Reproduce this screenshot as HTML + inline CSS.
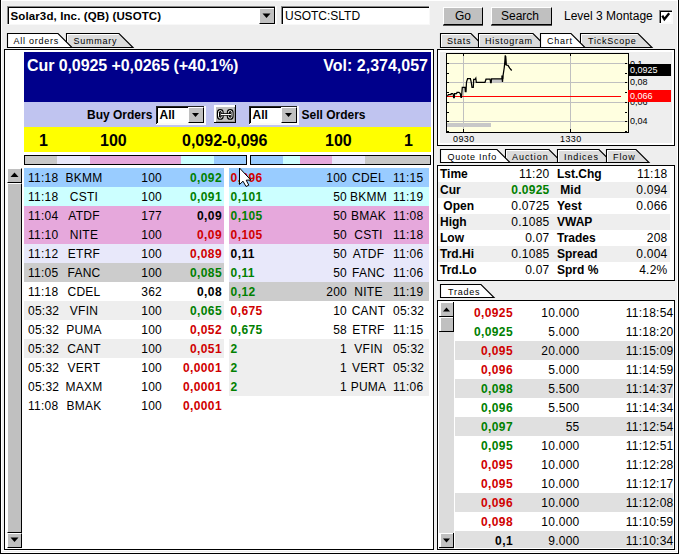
<!DOCTYPE html>
<html><head><meta charset="utf-8"><style>
html,body{margin:0;padding:0;}
body{width:682px;height:554px;position:relative;overflow:hidden;background:#eeeeee;font-family:"Liberation Sans",sans-serif;}
.a{position:absolute;}
.t{position:absolute;white-space:pre;line-height:14px;font-family:"Liberation Sans",sans-serif;}
</style></head><body>
<div class="a" style="left:0px;top:0px;width:682px;height:1px;background:#fff;"></div>
<div class="a" style="left:0px;top:0px;width:1px;height:554px;background:#000;"></div>
<div class="a" style="left:1px;top:1px;width:1px;height:551px;background:#fff;"></div>
<div class="a" style="left:678px;top:0px;width:1px;height:554px;background:#000;"></div>
<div class="a" style="left:677px;top:1px;width:1px;height:551px;background:#fff;"></div>
<div class="a" style="left:679px;top:0px;width:3px;height:554px;background:#fff;"></div>
<div class="a" style="left:0px;top:553px;width:679px;height:1px;background:#000;"></div>
<div class="a" style="left:1px;top:550px;width:677px;height:1px;background:#fff;"></div>
<div class="a" style="left:1px;top:552px;width:677px;height:1px;background:#fff;"></div>
<div class="a" style="left:7px;top:6px;width:270px;height:19px;background:#fafafa;"></div>
<div class="a" style="left:8px;top:7px;width:268px;height:17px;background:#fff;"></div>
<div class="a" style="left:7px;top:6px;width:268px;height:1px;background:#888;"></div>
<div class="a" style="left:7px;top:6px;width:1px;height:19px;background:#888;"></div>
<div class="a" style="left:8px;top:7px;width:267px;height:1px;background:#000;"></div>
<div class="a" style="left:8px;top:7px;width:1px;height:17px;background:#000;"></div>
<div class="a" style="left:7px;top:24px;width:270px;height:1px;background:#f8f8f8;"></div>
<div class="a" style="left:276px;top:6px;width:1px;height:19px;background:#f8f8f8;"></div>
<div class="a" style="left:259px;top:8px;width:16px;height:16px;background:#c0c0c0;border-top:1px solid #fff;border-left:1px solid #fff;border-bottom:1px solid #000;border-right:1px solid #000;box-sizing:border-box;"></div>
<div class="a" style="left:274px;top:7px;width:1px;height:17px;background:#000;"></div>
<svg class="a" style="left:262px;top:13px" width="10" height="6"><path d="M0.5 0.5 L8.5 0.5 L4.5 5 Z" fill="#000"/></svg>
<div class="t" style="top:9px;font-size:11.5px;font-weight:bold;color:#000;left:10.5px;letter-spacing:0.12px;">Solar3d, Inc. (QB) (USOTC)</div>
<div class="a" style="left:281px;top:6px;width:149px;height:19px;background:#fafafa;"></div>
<div class="a" style="left:282px;top:7px;width:147px;height:17px;background:#fff;"></div>
<div class="a" style="left:281px;top:6px;width:148px;height:1px;background:#888;"></div>
<div class="a" style="left:281px;top:6px;width:1px;height:19px;background:#888;"></div>
<div class="a" style="left:282px;top:7px;width:147px;height:1px;background:#000;"></div>
<div class="a" style="left:282px;top:7px;width:1px;height:17px;background:#000;"></div>
<div class="a" style="left:281px;top:24px;width:149px;height:1px;background:#f8f8f8;"></div>
<div class="a" style="left:429px;top:6px;width:1px;height:19px;background:#f8f8f8;"></div>
<div class="t" style="top:9px;font-size:12px;font-weight:normal;color:#000;left:285px;">USOTC:SLTD</div>
<div class="a" style="left:443px;top:7px;width:40px;height:18px;background:#c0c0c0;border-top:1px solid #fff;border-left:1px solid #fff;border-bottom:1px solid #000;border-right:1px solid #000;box-sizing:border-box;"></div>
<div class="a" style="left:443px;top:25px;width:40px;height:1px;background:#555;"></div>
<div class="t" style="top:9px;font-size:12px;font-weight:normal;color:#000;left:455px;">Go</div>
<div class="a" style="left:491px;top:7px;width:61px;height:18px;background:#c0c0c0;border-top:1px solid #fff;border-left:1px solid #fff;border-bottom:1px solid #000;border-right:1px solid #000;box-sizing:border-box;"></div>
<div class="a" style="left:491px;top:25px;width:61px;height:1px;background:#555;"></div>
<div class="t" style="top:9px;font-size:12px;font-weight:normal;color:#000;left:501px;">Search</div>
<div class="t" style="top:9px;font-size:12px;font-weight:normal;color:#000;left:564px;">Level 3 Montage</div>
<div class="a" style="left:659px;top:10px;width:14px;height:14px;background:#fafafa;"></div>
<div class="a" style="left:661px;top:12px;width:10px;height:10px;background:#fff;"></div>
<div class="a" style="left:659px;top:10px;width:13px;height:1px;background:#888;"></div>
<div class="a" style="left:659px;top:10px;width:1px;height:13px;background:#888;"></div>
<div class="a" style="left:660px;top:11px;width:12px;height:1px;background:#000;"></div>
<div class="a" style="left:660px;top:11px;width:1px;height:12px;background:#000;"></div>
<svg class="a" style="left:659px;top:10px" width="14" height="14"><path d="M3.3 5.6 L5.4 9.3 L10.2 3.2" stroke="#000" stroke-width="2.3" fill="none" stroke-linecap="butt" stroke-linejoin="miter"/></svg>
<!--tabs-->
<svg class="a" style="left:66px;top:33px;overflow:visible" width="68" height="16"><polygon points="0.5,14.5 0.5,0.5 53,0.5 67,14.5" fill="#dcdcdc" stroke="#000" stroke-width="1.1"/><polyline points="1.5,14 1.5,1.5 52.5,1.5" fill="none" stroke="#fff" stroke-width="1"/></svg>
<div class="t" style="top:34.0px;font-size:9px;font-weight:normal;color:#000;left:73.5px;letter-spacing:0.75px;">Summary</div>
<svg class="a" style="left:7px;top:33px;overflow:visible" width="66" height="16"><polygon points="0.5,14.5 0.5,0.5 51,0.5 65,14.5" fill="#fff" stroke="#000" stroke-width="1.1"/></svg>
<div class="t" style="top:34.0px;font-size:9px;font-weight:normal;color:#000;left:13.5px;letter-spacing:0.75px;">All orders</div>
<svg class="a" style="left:440px;top:33px;overflow:visible" width="46" height="16"><polygon points="0.5,14.5 0.5,0.5 31,0.5 45,14.5" fill="#dcdcdc" stroke="#000" stroke-width="1.1"/><polyline points="1.5,14 1.5,1.5 30.5,1.5" fill="none" stroke="#fff" stroke-width="1"/></svg>
<div class="t" style="top:34.0px;font-size:9px;font-weight:normal;color:#000;left:447px;letter-spacing:0.75px;">Stats</div>
<svg class="a" style="left:478px;top:33px;overflow:visible" width="70" height="16"><polygon points="0.5,14.5 0.5,0.5 55,0.5 69,14.5" fill="#dcdcdc" stroke="#000" stroke-width="1.1"/><polyline points="1.5,14 1.5,1.5 54.5,1.5" fill="none" stroke="#fff" stroke-width="1"/></svg>
<div class="t" style="top:34.0px;font-size:9px;font-weight:normal;color:#000;left:485px;letter-spacing:0.75px;">Histogram</div>
<svg class="a" style="left:580px;top:33px;overflow:visible" width="73" height="16"><polygon points="0.5,14.5 0.5,0.5 58,0.5 72,14.5" fill="#dcdcdc" stroke="#000" stroke-width="1.1"/><polyline points="1.5,14 1.5,1.5 57.5,1.5" fill="none" stroke="#fff" stroke-width="1"/></svg>
<div class="t" style="top:34.0px;font-size:9px;font-weight:normal;color:#000;left:588px;letter-spacing:0.75px;">TickScope</div>
<svg class="a" style="left:540px;top:33px;overflow:visible" width="46" height="16"><polygon points="0.5,14.5 0.5,0.5 31,0.5 45,14.5" fill="#fff" stroke="#000" stroke-width="1.1"/></svg>
<div class="t" style="top:34.0px;font-size:9px;font-weight:normal;color:#000;left:547px;letter-spacing:0.75px;">Chart</div>
<div class="a" style="left:4px;top:49px;width:430px;height:501px;background:#fff;border:1px solid #000;box-sizing:border-box;"></div>
<div class="a" style="left:24px;top:52px;width:407px;height:50px;background:#00008b;"></div>
<div class="t" style="top:59px;font-size:16px;font-weight:bold;color:#fff;left:27px;letter-spacing:-0.08px;">Cur 0,0925 +0,0265 (+40.1%)</div>
<div class="t" style="top:59px;font-size:16px;font-weight:bold;color:#fff;right:254px;text-align:right;">Vol: 2,374,057</div>
<div class="a" style="left:24px;top:102px;width:407px;height:25px;background:#c0c4f0;"></div>
<div class="t" style="top:107.5px;font-size:12px;font-weight:bold;color:#000;left:87px;">Buy Orders</div>
<div class="t" style="top:107.5px;font-size:12px;font-weight:bold;color:#000;left:301.5px;">Sell Orders</div>
<div class="a" style="left:156px;top:106px;width:50px;height:19px;background:#fafafa;"></div>
<div class="a" style="left:157px;top:107px;width:47px;height:16px;background:#fff;"></div>
<div class="a" style="left:156px;top:106px;width:48px;height:1px;background:#222;"></div>
<div class="a" style="left:156px;top:106px;width:1px;height:18px;background:#222;"></div>
<div class="a" style="left:157px;top:107px;width:47px;height:1px;background:#000;"></div>
<div class="a" style="left:157px;top:107px;width:1px;height:16px;background:#000;"></div>
<div class="a" style="left:188px;top:107px;width:16px;height:16px;background:#c0c0c0;border-top:1px solid #fff;border-left:1px solid #fff;border-bottom:1px solid #000;border-right:1px solid #000;box-sizing:border-box;"></div>
<svg class="a" style="left:192px;top:113px" width="8" height="5"><path d="M0 0 L7 0 L3.5 4 Z" fill="#000"/></svg>
<div class="t" style="top:108px;font-size:12px;font-weight:bold;color:#000;left:159.5px;">All</div>
<div class="a" style="left:249px;top:106px;width:50px;height:19px;background:#fafafa;"></div>
<div class="a" style="left:250px;top:107px;width:47px;height:16px;background:#fff;"></div>
<div class="a" style="left:249px;top:106px;width:48px;height:1px;background:#222;"></div>
<div class="a" style="left:249px;top:106px;width:1px;height:18px;background:#222;"></div>
<div class="a" style="left:250px;top:107px;width:47px;height:1px;background:#000;"></div>
<div class="a" style="left:250px;top:107px;width:1px;height:16px;background:#000;"></div>
<div class="a" style="left:281px;top:107px;width:16px;height:16px;background:#c0c0c0;border-top:1px solid #fff;border-left:1px solid #fff;border-bottom:1px solid #000;border-right:1px solid #000;box-sizing:border-box;"></div>
<svg class="a" style="left:285px;top:113px" width="8" height="5"><path d="M0 0 L7 0 L3.5 4 Z" fill="#000"/></svg>
<div class="t" style="top:108px;font-size:12px;font-weight:bold;color:#000;left:252.5px;">All</div>
<div class="a" style="left:214px;top:105px;width:22px;height:18px;background:#c0c0c0;"></div>
<div class="a" style="left:214px;top:105px;width:21px;height:2px;background:#fff;"></div>
<div class="a" style="left:214px;top:105px;width:2px;height:17px;background:#fff;"></div>
<div class="a" style="left:235px;top:105px;width:1px;height:18px;background:#000;"></div>
<div class="a" style="left:214px;top:122px;width:22px;height:1px;background:#000;"></div>
<div class="a" style="left:216px;top:121px;width:19px;height:1px;background:#999;"></div>
<div class="a" style="left:234px;top:107px;width:1px;height:15px;background:#999;"></div>
<svg class="a" style="left:212px;top:103px" width="28" height="22"><rect x="6.5" y="7.6" width="3.6" height="7.6" rx="1.8" fill="none" stroke="#000" stroke-width="3.2"/><rect x="16.4" y="7.6" width="3.6" height="7.6" rx="1.8" fill="none" stroke="#000" stroke-width="3.2"/><rect x="6.5" y="7.6" width="3.6" height="7.6" rx="1.8" fill="none" stroke="#fff" stroke-width="1"/><rect x="16.4" y="7.6" width="3.6" height="7.6" rx="1.8" fill="none" stroke="#fff" stroke-width="1"/><rect x="9" y="10.2" width="10" height="2.6" fill="#000"/><rect x="9" y="11" width="10" height="1.1" fill="#fff"/></svg>
<div class="a" style="left:24px;top:127px;width:407px;height:25px;background:#ffff00;"></div>
<div class="t" style="top:134px;font-size:16px;font-weight:bold;color:#000;left:39px;">1</div>
<div class="t" style="top:134px;font-size:16px;font-weight:bold;color:#000;left:100px;">100</div>
<div class="t" style="top:134px;font-size:16px;font-weight:bold;color:#000;left:182px;">0,092-0,096</div>
<div class="t" style="top:134px;font-size:16px;font-weight:bold;color:#000;left:325px;">100</div>
<div class="t" style="top:134px;font-size:16px;font-weight:bold;color:#000;left:404px;">1</div>
<div class="a" style="left:24px;top:155px;width:223px;height:10px;border:1px solid #000;box-sizing:border-box;"></div>
<div class="a" style="left:25px;top:156px;width:32px;height:8px;background:#c8c8c8;"></div>
<div class="a" style="left:57px;top:156px;width:33px;height:8px;background:#e8e8fa;"></div>
<div class="a" style="left:90px;top:156px;width:91px;height:8px;background:#e6a8dc;"></div>
<div class="a" style="left:181px;top:156px;width:33px;height:8px;background:#ccffff;"></div>
<div class="a" style="left:214px;top:156px;width:32px;height:8px;background:#99ccff;"></div>
<div class="a" style="left:250px;top:155px;width:181px;height:10px;border:1px solid #000;box-sizing:border-box;"></div>
<div class="a" style="left:251px;top:156px;width:32px;height:8px;background:#99ccff;"></div>
<div class="a" style="left:283px;top:156px;width:17px;height:8px;background:#ccffff;"></div>
<div class="a" style="left:300px;top:156px;width:32px;height:8px;background:#e6a8dc;"></div>
<div class="a" style="left:332px;top:156px;width:33px;height:8px;background:#e8e8fa;"></div>
<div class="a" style="left:365px;top:156px;width:65px;height:8px;background:#c8c8c8;"></div>
<div class="a" style="left:7px;top:168px;width:15px;height:15px;background:#c0c0c0;border-top:1px solid #fff;border-left:1px solid #fff;border-bottom:1px solid #000;border-right:1px solid #000;box-sizing:border-box;"></div>
<svg class="a" style="left:10px;top:172px" width="9" height="6"><path d="M0.5 5 L8.5 5 L4.5 0.5 Z" fill="#000"/></svg>
<div class="a" style="left:7px;top:183px;width:15px;height:350px;background:#c0c0c0;border-top:1px solid #fff;border-left:1px solid #fff;border-bottom:1px solid #000;border-right:1px solid #000;box-sizing:border-box;"></div>
<div class="a" style="left:7px;top:533px;width:15px;height:15px;background:#c0c0c0;border-top:1px solid #fff;border-left:1px solid #fff;border-bottom:1px solid #000;border-right:1px solid #000;box-sizing:border-box;"></div>
<svg class="a" style="left:10px;top:537px" width="9" height="6"><path d="M0.5 0.5 L8.5 0.5 L4.5 5 Z" fill="#000"/></svg>
<div class="a" style="left:24px;top:168px;width:200px;height:19px;background:#99ccff;"></div>
<div class="t" style="top:171px;font-size:12px;font-weight:normal;color:#000;left:28px;letter-spacing:0.25px;">11:18</div>
<div class="t" style="top:171px;font-size:12px;font-weight:normal;color:#000;left:-16px;width:200px;text-align:center;letter-spacing:0.25px;">BKMM</div>
<div class="t" style="top:171px;font-size:12px;font-weight:normal;color:#000;right:520px;text-align:right;letter-spacing:0.25px;">100</div>
<div class="t" style="top:171px;font-size:12px;font-weight:bold;color:#008000;right:460px;text-align:right;letter-spacing:0.4px;">0,092</div>
<div class="a" style="left:24px;top:187px;width:200px;height:19px;background:#ccffff;"></div>
<div class="t" style="top:190px;font-size:12px;font-weight:normal;color:#000;left:28px;letter-spacing:0.25px;">11:18</div>
<div class="t" style="top:190px;font-size:12px;font-weight:normal;color:#000;left:-16px;width:200px;text-align:center;letter-spacing:0.25px;">CSTI</div>
<div class="t" style="top:190px;font-size:12px;font-weight:normal;color:#000;right:520px;text-align:right;letter-spacing:0.25px;">100</div>
<div class="t" style="top:190px;font-size:12px;font-weight:bold;color:#008000;right:460px;text-align:right;letter-spacing:0.4px;">0,091</div>
<div class="a" style="left:24px;top:206px;width:200px;height:19px;background:#e6a8dc;"></div>
<div class="t" style="top:209px;font-size:12px;font-weight:normal;color:#000;left:28px;letter-spacing:0.25px;">11:04</div>
<div class="t" style="top:209px;font-size:12px;font-weight:normal;color:#000;left:-16px;width:200px;text-align:center;letter-spacing:0.25px;">ATDF</div>
<div class="t" style="top:209px;font-size:12px;font-weight:normal;color:#000;right:520px;text-align:right;letter-spacing:0.25px;">177</div>
<div class="t" style="top:209px;font-size:12px;font-weight:bold;color:#000;right:460px;text-align:right;letter-spacing:0.4px;">0,09</div>
<div class="a" style="left:24px;top:225px;width:200px;height:19px;background:#e6a8dc;"></div>
<div class="t" style="top:228px;font-size:12px;font-weight:normal;color:#000;left:28px;letter-spacing:0.25px;">11:10</div>
<div class="t" style="top:228px;font-size:12px;font-weight:normal;color:#000;left:-16px;width:200px;text-align:center;letter-spacing:0.25px;">NITE</div>
<div class="t" style="top:228px;font-size:12px;font-weight:normal;color:#000;right:520px;text-align:right;letter-spacing:0.25px;">100</div>
<div class="t" style="top:228px;font-size:12px;font-weight:bold;color:#d00000;right:460px;text-align:right;letter-spacing:0.4px;">0,09</div>
<div class="a" style="left:24px;top:244px;width:200px;height:19px;background:#e8e8fa;"></div>
<div class="t" style="top:247px;font-size:12px;font-weight:normal;color:#000;left:28px;letter-spacing:0.25px;">11:12</div>
<div class="t" style="top:247px;font-size:12px;font-weight:normal;color:#000;left:-16px;width:200px;text-align:center;letter-spacing:0.25px;">ETRF</div>
<div class="t" style="top:247px;font-size:12px;font-weight:normal;color:#000;right:520px;text-align:right;letter-spacing:0.25px;">100</div>
<div class="t" style="top:247px;font-size:12px;font-weight:bold;color:#d00000;right:460px;text-align:right;letter-spacing:0.4px;">0,089</div>
<div class="a" style="left:24px;top:263px;width:200px;height:19px;background:#cccccc;"></div>
<div class="t" style="top:266px;font-size:12px;font-weight:normal;color:#000;left:28px;letter-spacing:0.25px;">11:05</div>
<div class="t" style="top:266px;font-size:12px;font-weight:normal;color:#000;left:-16px;width:200px;text-align:center;letter-spacing:0.25px;">FANC</div>
<div class="t" style="top:266px;font-size:12px;font-weight:normal;color:#000;right:520px;text-align:right;letter-spacing:0.25px;">100</div>
<div class="t" style="top:266px;font-size:12px;font-weight:bold;color:#008000;right:460px;text-align:right;letter-spacing:0.4px;">0,085</div>
<div class="a" style="left:24px;top:282px;width:200px;height:19px;background:#ffffff;"></div>
<div class="t" style="top:285px;font-size:12px;font-weight:normal;color:#000;left:28px;letter-spacing:0.25px;">11:18</div>
<div class="t" style="top:285px;font-size:12px;font-weight:normal;color:#000;left:-16px;width:200px;text-align:center;letter-spacing:0.25px;">CDEL</div>
<div class="t" style="top:285px;font-size:12px;font-weight:normal;color:#000;right:520px;text-align:right;letter-spacing:0.25px;">362</div>
<div class="t" style="top:285px;font-size:12px;font-weight:bold;color:#000;right:460px;text-align:right;letter-spacing:0.4px;">0,08</div>
<div class="a" style="left:24px;top:301px;width:200px;height:19px;background:#eeeeee;"></div>
<div class="t" style="top:304px;font-size:12px;font-weight:normal;color:#000;left:28px;letter-spacing:0.25px;">05:32</div>
<div class="t" style="top:304px;font-size:12px;font-weight:normal;color:#000;left:-16px;width:200px;text-align:center;letter-spacing:0.25px;">VFIN</div>
<div class="t" style="top:304px;font-size:12px;font-weight:normal;color:#000;right:520px;text-align:right;letter-spacing:0.25px;">100</div>
<div class="t" style="top:304px;font-size:12px;font-weight:bold;color:#008000;right:460px;text-align:right;letter-spacing:0.4px;">0,065</div>
<div class="a" style="left:24px;top:320px;width:200px;height:19px;background:#ffffff;"></div>
<div class="t" style="top:323px;font-size:12px;font-weight:normal;color:#000;left:28px;letter-spacing:0.25px;">05:32</div>
<div class="t" style="top:323px;font-size:12px;font-weight:normal;color:#000;left:-16px;width:200px;text-align:center;letter-spacing:0.25px;">PUMA</div>
<div class="t" style="top:323px;font-size:12px;font-weight:normal;color:#000;right:520px;text-align:right;letter-spacing:0.25px;">100</div>
<div class="t" style="top:323px;font-size:12px;font-weight:bold;color:#d00000;right:460px;text-align:right;letter-spacing:0.4px;">0,052</div>
<div class="a" style="left:24px;top:339px;width:200px;height:19px;background:#eeeeee;"></div>
<div class="t" style="top:342px;font-size:12px;font-weight:normal;color:#000;left:28px;letter-spacing:0.25px;">05:32</div>
<div class="t" style="top:342px;font-size:12px;font-weight:normal;color:#000;left:-16px;width:200px;text-align:center;letter-spacing:0.25px;">CANT</div>
<div class="t" style="top:342px;font-size:12px;font-weight:normal;color:#000;right:520px;text-align:right;letter-spacing:0.25px;">100</div>
<div class="t" style="top:342px;font-size:12px;font-weight:bold;color:#d00000;right:460px;text-align:right;letter-spacing:0.4px;">0,051</div>
<div class="a" style="left:24px;top:358px;width:200px;height:19px;background:#ffffff;"></div>
<div class="t" style="top:361px;font-size:12px;font-weight:normal;color:#000;left:28px;letter-spacing:0.25px;">05:32</div>
<div class="t" style="top:361px;font-size:12px;font-weight:normal;color:#000;left:-16px;width:200px;text-align:center;letter-spacing:0.25px;">VERT</div>
<div class="t" style="top:361px;font-size:12px;font-weight:normal;color:#000;right:520px;text-align:right;letter-spacing:0.25px;">100</div>
<div class="t" style="top:361px;font-size:12px;font-weight:bold;color:#d00000;right:460px;text-align:right;letter-spacing:0.4px;">0,0001</div>
<div class="a" style="left:24px;top:377px;width:200px;height:19px;background:#ffffff;"></div>
<div class="t" style="top:380px;font-size:12px;font-weight:normal;color:#000;left:28px;letter-spacing:0.25px;">05:32</div>
<div class="t" style="top:380px;font-size:12px;font-weight:normal;color:#000;left:-16px;width:200px;text-align:center;letter-spacing:0.25px;">MAXM</div>
<div class="t" style="top:380px;font-size:12px;font-weight:normal;color:#000;right:520px;text-align:right;letter-spacing:0.25px;">100</div>
<div class="t" style="top:380px;font-size:12px;font-weight:bold;color:#d00000;right:460px;text-align:right;letter-spacing:0.4px;">0,0001</div>
<div class="a" style="left:24px;top:396px;width:200px;height:19px;background:#ffffff;"></div>
<div class="t" style="top:399px;font-size:12px;font-weight:normal;color:#000;left:28px;letter-spacing:0.25px;">11:08</div>
<div class="t" style="top:399px;font-size:12px;font-weight:normal;color:#000;left:-16px;width:200px;text-align:center;letter-spacing:0.25px;">BMAK</div>
<div class="t" style="top:399px;font-size:12px;font-weight:normal;color:#000;right:520px;text-align:right;letter-spacing:0.25px;">100</div>
<div class="t" style="top:399px;font-size:12px;font-weight:bold;color:#d00000;right:460px;text-align:right;letter-spacing:0.4px;">0,0001</div>
<div class="a" style="left:229px;top:168px;width:200px;height:19px;background:#99ccff;"></div>
<div class="t" style="top:171px;font-size:12px;font-weight:bold;color:#d00000;left:230.6px;letter-spacing:0.4px;">0,096</div>
<div class="t" style="top:171px;font-size:12px;font-weight:normal;color:#000;right:335px;text-align:right;letter-spacing:0.25px;">100</div>
<div class="t" style="top:171px;font-size:12px;font-weight:normal;color:#000;left:268.5px;width:200px;text-align:center;letter-spacing:0.25px;">CDEL</div>
<div class="t" style="top:171px;font-size:12px;font-weight:normal;color:#000;left:393px;letter-spacing:0.25px;">11:15</div>
<div class="a" style="left:229px;top:187px;width:200px;height:19px;background:#ccffff;"></div>
<div class="t" style="top:190px;font-size:12px;font-weight:bold;color:#008000;left:230.6px;letter-spacing:0.4px;">0,101</div>
<div class="t" style="top:190px;font-size:12px;font-weight:normal;color:#000;right:335px;text-align:right;letter-spacing:0.25px;">50</div>
<div class="t" style="top:190px;font-size:12px;font-weight:normal;color:#000;left:268.5px;width:200px;text-align:center;letter-spacing:0.25px;">BKMM</div>
<div class="t" style="top:190px;font-size:12px;font-weight:normal;color:#000;left:393px;letter-spacing:0.25px;">11:19</div>
<div class="a" style="left:229px;top:206px;width:200px;height:19px;background:#e6a8dc;"></div>
<div class="t" style="top:209px;font-size:12px;font-weight:bold;color:#008000;left:230.6px;letter-spacing:0.4px;">0,105</div>
<div class="t" style="top:209px;font-size:12px;font-weight:normal;color:#000;right:335px;text-align:right;letter-spacing:0.25px;">50</div>
<div class="t" style="top:209px;font-size:12px;font-weight:normal;color:#000;left:268.5px;width:200px;text-align:center;letter-spacing:0.25px;">BMAK</div>
<div class="t" style="top:209px;font-size:12px;font-weight:normal;color:#000;left:393px;letter-spacing:0.25px;">11:08</div>
<div class="a" style="left:229px;top:225px;width:200px;height:19px;background:#e6a8dc;"></div>
<div class="t" style="top:228px;font-size:12px;font-weight:bold;color:#d00000;left:230.6px;letter-spacing:0.4px;">0,105</div>
<div class="t" style="top:228px;font-size:12px;font-weight:normal;color:#000;right:335px;text-align:right;letter-spacing:0.25px;">50</div>
<div class="t" style="top:228px;font-size:12px;font-weight:normal;color:#000;left:268.5px;width:200px;text-align:center;letter-spacing:0.25px;">CSTI</div>
<div class="t" style="top:228px;font-size:12px;font-weight:normal;color:#000;left:393px;letter-spacing:0.25px;">11:18</div>
<div class="a" style="left:229px;top:244px;width:200px;height:19px;background:#e8e8fa;"></div>
<div class="t" style="top:247px;font-size:12px;font-weight:bold;color:#000;left:230.6px;letter-spacing:0.4px;">0,11</div>
<div class="t" style="top:247px;font-size:12px;font-weight:normal;color:#000;right:335px;text-align:right;letter-spacing:0.25px;">50</div>
<div class="t" style="top:247px;font-size:12px;font-weight:normal;color:#000;left:268.5px;width:200px;text-align:center;letter-spacing:0.25px;">ATDF</div>
<div class="t" style="top:247px;font-size:12px;font-weight:normal;color:#000;left:393px;letter-spacing:0.25px;">11:06</div>
<div class="a" style="left:229px;top:263px;width:200px;height:19px;background:#e8e8fa;"></div>
<div class="t" style="top:266px;font-size:12px;font-weight:bold;color:#008000;left:230.6px;letter-spacing:0.4px;">0,11</div>
<div class="t" style="top:266px;font-size:12px;font-weight:normal;color:#000;right:335px;text-align:right;letter-spacing:0.25px;">50</div>
<div class="t" style="top:266px;font-size:12px;font-weight:normal;color:#000;left:268.5px;width:200px;text-align:center;letter-spacing:0.25px;">FANC</div>
<div class="t" style="top:266px;font-size:12px;font-weight:normal;color:#000;left:393px;letter-spacing:0.25px;">11:06</div>
<div class="a" style="left:229px;top:282px;width:200px;height:19px;background:#cccccc;"></div>
<div class="t" style="top:285px;font-size:12px;font-weight:bold;color:#008000;left:230.6px;letter-spacing:0.4px;">0,12</div>
<div class="t" style="top:285px;font-size:12px;font-weight:normal;color:#000;right:335px;text-align:right;letter-spacing:0.25px;">200</div>
<div class="t" style="top:285px;font-size:12px;font-weight:normal;color:#000;left:268.5px;width:200px;text-align:center;letter-spacing:0.25px;">NITE</div>
<div class="t" style="top:285px;font-size:12px;font-weight:normal;color:#000;left:393px;letter-spacing:0.25px;">11:19</div>
<div class="a" style="left:229px;top:301px;width:200px;height:19px;background:#ffffff;"></div>
<div class="t" style="top:304px;font-size:12px;font-weight:bold;color:#d00000;left:230.6px;letter-spacing:0.4px;">0,675</div>
<div class="t" style="top:304px;font-size:12px;font-weight:normal;color:#000;right:335px;text-align:right;letter-spacing:0.25px;">10</div>
<div class="t" style="top:304px;font-size:12px;font-weight:normal;color:#000;left:268.5px;width:200px;text-align:center;letter-spacing:0.25px;">CANT</div>
<div class="t" style="top:304px;font-size:12px;font-weight:normal;color:#000;left:393px;letter-spacing:0.25px;">05:32</div>
<div class="a" style="left:229px;top:320px;width:200px;height:19px;background:#ffffff;"></div>
<div class="t" style="top:323px;font-size:12px;font-weight:bold;color:#008000;left:230.6px;letter-spacing:0.4px;">0,675</div>
<div class="t" style="top:323px;font-size:12px;font-weight:normal;color:#000;right:335px;text-align:right;letter-spacing:0.25px;">58</div>
<div class="t" style="top:323px;font-size:12px;font-weight:normal;color:#000;left:268.5px;width:200px;text-align:center;letter-spacing:0.25px;">ETRF</div>
<div class="t" style="top:323px;font-size:12px;font-weight:normal;color:#000;left:393px;letter-spacing:0.25px;">11:15</div>
<div class="a" style="left:229px;top:339px;width:200px;height:19px;background:#eeeeee;"></div>
<div class="t" style="top:342px;font-size:12px;font-weight:bold;color:#008000;left:230.6px;letter-spacing:0.4px;">2</div>
<div class="t" style="top:342px;font-size:12px;font-weight:normal;color:#000;right:335px;text-align:right;letter-spacing:0.25px;">1</div>
<div class="t" style="top:342px;font-size:12px;font-weight:normal;color:#000;left:268.5px;width:200px;text-align:center;letter-spacing:0.25px;">VFIN</div>
<div class="t" style="top:342px;font-size:12px;font-weight:normal;color:#000;left:393px;letter-spacing:0.25px;">05:32</div>
<div class="a" style="left:229px;top:358px;width:200px;height:19px;background:#eeeeee;"></div>
<div class="t" style="top:361px;font-size:12px;font-weight:bold;color:#008000;left:230.6px;letter-spacing:0.4px;">2</div>
<div class="t" style="top:361px;font-size:12px;font-weight:normal;color:#000;right:335px;text-align:right;letter-spacing:0.25px;">1</div>
<div class="t" style="top:361px;font-size:12px;font-weight:normal;color:#000;left:268.5px;width:200px;text-align:center;letter-spacing:0.25px;">VERT</div>
<div class="t" style="top:361px;font-size:12px;font-weight:normal;color:#000;left:393px;letter-spacing:0.25px;">05:32</div>
<div class="a" style="left:229px;top:377px;width:200px;height:19px;background:#eeeeee;"></div>
<div class="t" style="top:380px;font-size:12px;font-weight:bold;color:#008000;left:230.6px;letter-spacing:0.4px;">2</div>
<div class="t" style="top:380px;font-size:12px;font-weight:normal;color:#000;right:335px;text-align:right;letter-spacing:0.25px;">1</div>
<div class="t" style="top:380px;font-size:12px;font-weight:normal;color:#000;left:268.5px;width:200px;text-align:center;letter-spacing:0.25px;">PUMA</div>
<div class="t" style="top:380px;font-size:12px;font-weight:normal;color:#000;left:393px;letter-spacing:0.25px;">11:06</div>
<div class="a" style="left:437px;top:49px;width:238px;height:97px;background:#eeeeee;border:1px solid #000;box-sizing:border-box;"></div>
<div class="a" style="left:438px;top:50px;width:236px;height:2px;background:#fff;"></div>
<div class="a" style="left:438px;top:50px;width:2px;height:95px;background:#fff;"></div>
<div class="a" style="left:438px;top:143px;width:236px;height:2px;background:#fff;"></div>
<div class="a" style="left:672px;top:50px;width:2px;height:95px;background:#fff;"></div>
<div class="a" style="left:446px;top:53px;width:183px;height:80px;background:#ffffe0;border:1px solid #000;box-sizing:border-box;"></div>
<!--chart-->
<svg class="a" style="left:0;top:0" width="682" height="554"><line x1="447" y1="63.5" x2="628" y2="63.5" stroke="#c0c0c0" stroke-width="1"/><line x1="447" y1="82.5" x2="628" y2="82.5" stroke="#c0c0c0" stroke-width="1"/><line x1="447" y1="102.5" x2="628" y2="102.5" stroke="#c0c0c0" stroke-width="1"/><line x1="447" y1="121.5" x2="628" y2="121.5" stroke="#c0c0c0" stroke-width="1"/><line x1="463.5" y1="54" x2="463.5" y2="132" stroke="#c0c0c0" stroke-width="1"/><line x1="570.5" y1="54" x2="570.5" y2="132" stroke="#c0c0c0" stroke-width="1"/><line x1="447" y1="63.5" x2="449" y2="63.5" stroke="#000"/><line x1="625" y1="63.5" x2="627" y2="63.5" stroke="#000"/><line x1="447" y1="73.5" x2="449" y2="73.5" stroke="#000"/><line x1="625" y1="73.5" x2="627" y2="73.5" stroke="#000"/><line x1="447" y1="82.5" x2="449" y2="82.5" stroke="#000"/><line x1="625" y1="82.5" x2="627" y2="82.5" stroke="#000"/><line x1="447" y1="92.5" x2="449" y2="92.5" stroke="#000"/><line x1="625" y1="92.5" x2="627" y2="92.5" stroke="#000"/><line x1="447" y1="102.5" x2="449" y2="102.5" stroke="#000"/><line x1="625" y1="102.5" x2="627" y2="102.5" stroke="#000"/><line x1="447" y1="112.5" x2="449" y2="112.5" stroke="#000"/><line x1="625" y1="112.5" x2="627" y2="112.5" stroke="#000"/><line x1="447" y1="121.5" x2="449" y2="121.5" stroke="#000"/><line x1="625" y1="121.5" x2="627" y2="121.5" stroke="#000"/><line x1="447" y1="131.5" x2="449" y2="131.5" stroke="#000"/><line x1="625" y1="131.5" x2="627" y2="131.5" stroke="#000"/><line x1="463.5" y1="54" x2="463.5" y2="56" stroke="#000"/><line x1="463.5" y1="129" x2="463.5" y2="132" stroke="#000"/><line x1="570.5" y1="54" x2="570.5" y2="56" stroke="#000"/><line x1="570.5" y1="129" x2="570.5" y2="132" stroke="#000"/><rect x="447" y="123" width="44" height="4" fill="#c8c8c8"/><rect x="492.2" y="79.2" width="9.9" height="3" fill="#c8c8c8"/><line x1="447" y1="96.5" x2="621" y2="96.5" stroke="#ff0000" stroke-width="1.2"/><polyline points="447.4,96.3 448.4,94.5 451,94.5 451.2,93.6 452.6,93.6 453.2,94 453.6,97.5 454.3,97.5 454.6,93.6 456.6,93.6 457,92.4 459,92.4 460.3,93.6 461,97.3 461.5,97.3 462.3,87.3 465,87.3 465.3,91.7 466,91.7 466.5,82 467.6,78.7 470.4,78.7 471.2,82 472,87.3 473.3,87.3 473.7,79.4 475.2,79.2 475.8,78.2 476.3,82.3 485,82.3 486,79.2 490.1,79.2 490.6,82.5 491.2,82.5 491.6,78.8 502.2,78.6 502.5,81.9 503,75.8 504.2,68 504.6,64.4 505.3,55.3 506.2,65 508,65.4 509.7,68.1 511.7,70.5" fill="none" stroke="#000" stroke-width="1.25" stroke-linejoin="miter"/><line x1="505.6" y1="56" x2="505.9" y2="65" stroke="#000" stroke-width="1.4"/><rect x="501.3" y="75.5" width="2" height="3.5" fill="#000"/></svg>
<div class="t" style="top:56.5px;font-size:9px;font-weight:normal;color:#000;left:630px;">0,1</div>
<div class="t" style="top:75px;font-size:9px;font-weight:normal;color:#000;left:630px;">0,08</div>
<div class="t" style="top:95px;font-size:9px;font-weight:normal;color:#000;left:630px;">0,06</div>
<div class="t" style="top:114px;font-size:9px;font-weight:normal;color:#000;left:630px;">0,04</div>
<div class="a" style="left:628px;top:64px;width:43px;height:12px;background:#000;"></div>
<div class="t" style="top:62.8px;font-size:9px;font-weight:normal;color:#fff;left:630px;">0,0925</div>
<div class="a" style="left:628px;top:90px;width:43px;height:12px;background:#ff0000;"></div>
<div class="t" style="top:89px;font-size:9px;font-weight:normal;color:#fff;left:630px;">0,066</div>
<div class="t" style="top:131.8px;font-size:9px;font-weight:normal;color:#000;left:453px;letter-spacing:0.4px">0930</div>
<div class="t" style="top:131.8px;font-size:9px;font-weight:normal;color:#000;left:560px;letter-spacing:0.4px">1330</div>
<svg class="a" style="left:505px;top:149px;overflow:visible" width="58" height="15"><polygon points="0.5,13.5 0.5,0.5 44,0.5 57,13.5" fill="#dcdcdc" stroke="#000" stroke-width="1.1"/><polyline points="1.5,13 1.5,1.5 43.5,1.5" fill="none" stroke="#fff" stroke-width="1"/></svg>
<div class="t" style="top:150px;font-size:9px;font-weight:normal;color:#000;left:512px;letter-spacing:0.95px;">Auction</div>
<svg class="a" style="left:557px;top:149px;overflow:visible" width="56" height="15"><polygon points="0.5,13.5 0.5,0.5 42,0.5 55,13.5" fill="#dcdcdc" stroke="#000" stroke-width="1.1"/><polyline points="1.5,13 1.5,1.5 41.5,1.5" fill="none" stroke="#fff" stroke-width="1"/></svg>
<div class="t" style="top:150px;font-size:9px;font-weight:normal;color:#000;left:564px;letter-spacing:0.9px;">Indices</div>
<svg class="a" style="left:606px;top:149px;overflow:visible" width="44" height="15"><polygon points="0.5,13.5 0.5,0.5 30,0.5 43,13.5" fill="#dcdcdc" stroke="#000" stroke-width="1.1"/><polyline points="1.5,13 1.5,1.5 29.5,1.5" fill="none" stroke="#fff" stroke-width="1"/></svg>
<div class="t" style="top:150px;font-size:9px;font-weight:normal;color:#000;left:613px;letter-spacing:0.9px;">Flow</div>
<svg class="a" style="left:440px;top:149px;overflow:visible" width="71" height="15"><polygon points="0.5,13.5 0.5,0.5 57,0.5 70,13.5" fill="#fff" stroke="#000" stroke-width="1.1"/></svg>
<div class="t" style="top:150px;font-size:9px;font-weight:normal;color:#000;left:447.5px;letter-spacing:0.75px;">Quote Info</div>
<div class="a" style="left:437px;top:165px;width:238px;height:116px;background:#fff;border:1px solid #000;box-sizing:border-box;"></div>
<div class="t" style="top:167px;font-size:12px;font-weight:bold;color:#000;left:440px;">Time</div>
<div class="t" style="top:167px;font-size:12px;font-weight:normal;color:#000;right:132.5px;text-align:right;letter-spacing:0.25px;">11:20</div>
<div class="t" style="top:167px;font-size:12px;font-weight:bold;color:#000;left:557px;">Lst.Chg</div>
<div class="t" style="top:167px;font-size:12px;font-weight:normal;color:#000;right:14.5px;text-align:right;letter-spacing:0.25px;">11:18</div>
<div class="a" style="left:438px;top:182px;width:232px;height:16px;background:#eeeeee;"></div>
<div class="t" style="top:183px;font-size:12px;font-weight:bold;color:#000;left:440px;">Cur</div>
<div class="t" style="top:183px;font-size:12px;font-weight:normal;color:#000;right:132.5px;text-align:right;letter-spacing:0.25px;"><b style="color:#008000">0.0925</b></div>
<div class="t" style="top:183px;font-size:12px;font-weight:bold;color:#000;left:557px;"> Mid</div>
<div class="t" style="top:183px;font-size:12px;font-weight:normal;color:#000;right:14.5px;text-align:right;letter-spacing:0.25px;">0.094</div>
<div class="t" style="top:199px;font-size:12px;font-weight:bold;color:#000;left:440px;"> Open</div>
<div class="t" style="top:199px;font-size:12px;font-weight:normal;color:#000;right:132.5px;text-align:right;letter-spacing:0.25px;">0.0725</div>
<div class="t" style="top:199px;font-size:12px;font-weight:bold;color:#000;left:557px;">Yest</div>
<div class="t" style="top:199px;font-size:12px;font-weight:normal;color:#000;right:14.5px;text-align:right;letter-spacing:0.25px;">0.066</div>
<div class="a" style="left:438px;top:214px;width:232px;height:16px;background:#eeeeee;"></div>
<div class="t" style="top:215px;font-size:12px;font-weight:bold;color:#000;left:440px;">High</div>
<div class="t" style="top:215px;font-size:12px;font-weight:normal;color:#000;right:132.5px;text-align:right;letter-spacing:0.25px;">0.1085</div>
<div class="t" style="top:215px;font-size:12px;font-weight:bold;color:#000;left:557px;">VWAP</div>
<div class="t" style="top:215px;font-size:12px;font-weight:normal;color:#000;right:14.5px;text-align:right;letter-spacing:0.25px;"></div>
<div class="t" style="top:231px;font-size:12px;font-weight:bold;color:#000;left:440px;">Low</div>
<div class="t" style="top:231px;font-size:12px;font-weight:normal;color:#000;right:132.5px;text-align:right;letter-spacing:0.25px;">0.07</div>
<div class="t" style="top:231px;font-size:12px;font-weight:bold;color:#000;left:557px;">Trades</div>
<div class="t" style="top:231px;font-size:12px;font-weight:normal;color:#000;right:14.5px;text-align:right;letter-spacing:0.25px;">208</div>
<div class="a" style="left:438px;top:246px;width:232px;height:16px;background:#eeeeee;"></div>
<div class="t" style="top:247px;font-size:12px;font-weight:bold;color:#000;left:440px;">Trd.Hi</div>
<div class="t" style="top:247px;font-size:12px;font-weight:normal;color:#000;right:132.5px;text-align:right;letter-spacing:0.25px;">0.1085</div>
<div class="t" style="top:247px;font-size:12px;font-weight:bold;color:#000;left:557px;">Spread</div>
<div class="t" style="top:247px;font-size:12px;font-weight:normal;color:#000;right:14.5px;text-align:right;letter-spacing:0.25px;">0.004</div>
<div class="t" style="top:263px;font-size:12px;font-weight:bold;color:#000;left:440px;">Trd.Lo</div>
<div class="t" style="top:263px;font-size:12px;font-weight:normal;color:#000;right:132.5px;text-align:right;letter-spacing:0.25px;">0.07</div>
<div class="t" style="top:263px;font-size:12px;font-weight:bold;color:#000;left:557px;">Sprd %</div>
<div class="t" style="top:263px;font-size:12px;font-weight:normal;color:#000;right:14.5px;text-align:right;letter-spacing:0.25px;">4.2%</div>
<svg class="a" style="left:440px;top:284px;overflow:visible" width="55" height="15"><polygon points="0.5,13.5 0.5,0.5 41,0.5 54,13.5" fill="#fff" stroke="#000" stroke-width="1.1"/></svg>
<div class="t" style="top:285px;font-size:9px;font-weight:normal;color:#000;left:448px;letter-spacing:0.75px;">Trades</div>
<div class="a" style="left:437px;top:300px;width:238px;height:250px;background:#fff;border:1px solid #000;box-sizing:border-box;"></div>
<div class="a" style="left:439px;top:302px;width:15px;height:247px;background:#dcdcdc;"></div>
<div class="a" style="left:439px;top:302px;width:15px;height:15px;background:#c0c0c0;"></div>
<div class="a" style="left:439px;top:302px;width:14px;height:1px;background:#fff;"></div>
<div class="a" style="left:439px;top:302px;width:2px;height:14px;background:#fff;"></div>
<div class="a" style="left:453px;top:302px;width:1px;height:15px;background:#000;"></div>
<div class="a" style="left:439px;top:316px;width:15px;height:1px;background:#000;"></div>
<svg class="a" style="left:443px;top:307px" width="8" height="5"><path d="M0 4.5 L7 4.5 L3.5 0.5 Z" fill="#000"/></svg>
<div class="a" style="left:439px;top:317px;width:15px;height:15px;background:#c0c0c0;"></div>
<div class="a" style="left:439px;top:317px;width:14px;height:1px;background:#fff;"></div>
<div class="a" style="left:439px;top:317px;width:2px;height:14px;background:#fff;"></div>
<div class="a" style="left:453px;top:317px;width:1px;height:15px;background:#000;"></div>
<div class="a" style="left:439px;top:331px;width:15px;height:1px;background:#000;"></div>
<div class="a" style="left:439px;top:533px;width:15px;height:15px;background:#c0c0c0;"></div>
<div class="a" style="left:439px;top:533px;width:14px;height:1px;background:#fff;"></div>
<div class="a" style="left:439px;top:533px;width:2px;height:14px;background:#fff;"></div>
<div class="a" style="left:453px;top:533px;width:1px;height:15px;background:#000;"></div>
<div class="a" style="left:439px;top:547px;width:15px;height:1px;background:#000;"></div>
<svg class="a" style="left:443px;top:538px" width="8" height="5"><path d="M0 0.5 L7 0.5 L3.5 4.5 Z" fill="#000"/></svg>
<div class="t" style="top:306px;font-size:12px;font-weight:bold;color:#d00000;right:169px;text-align:right;letter-spacing:0.4px;">0,0925</div>
<div class="t" style="top:306px;font-size:12px;font-weight:normal;color:#000;right:102.5px;text-align:right;letter-spacing:0.25px;">10.000</div>
<div class="t" style="top:306px;font-size:12px;font-weight:normal;color:#000;right:8.5px;text-align:right;letter-spacing:0.25px;">11:18:54</div>
<div class="t" style="top:325px;font-size:12px;font-weight:bold;color:#008000;right:169px;text-align:right;letter-spacing:0.4px;">0,0925</div>
<div class="t" style="top:325px;font-size:12px;font-weight:normal;color:#000;right:102.5px;text-align:right;letter-spacing:0.25px;">5.000</div>
<div class="t" style="top:325px;font-size:12px;font-weight:normal;color:#000;right:8.5px;text-align:right;letter-spacing:0.25px;">11:18:20</div>
<div class="a" style="left:455px;top:341px;width:218px;height:19px;background:#e0e0e0;"></div>
<div class="t" style="top:344px;font-size:12px;font-weight:bold;color:#d00000;right:169px;text-align:right;letter-spacing:0.4px;">0,095</div>
<div class="t" style="top:344px;font-size:12px;font-weight:normal;color:#000;right:102.5px;text-align:right;letter-spacing:0.25px;">20.000</div>
<div class="t" style="top:344px;font-size:12px;font-weight:normal;color:#000;right:8.5px;text-align:right;letter-spacing:0.25px;">11:15:09</div>
<div class="t" style="top:363px;font-size:12px;font-weight:bold;color:#d00000;right:169px;text-align:right;letter-spacing:0.4px;">0,096</div>
<div class="t" style="top:363px;font-size:12px;font-weight:normal;color:#000;right:102.5px;text-align:right;letter-spacing:0.25px;">5.000</div>
<div class="t" style="top:363px;font-size:12px;font-weight:normal;color:#000;right:8.5px;text-align:right;letter-spacing:0.25px;">11:14:59</div>
<div class="a" style="left:455px;top:379px;width:218px;height:19px;background:#e0e0e0;"></div>
<div class="t" style="top:382px;font-size:12px;font-weight:bold;color:#008000;right:169px;text-align:right;letter-spacing:0.4px;">0,098</div>
<div class="t" style="top:382px;font-size:12px;font-weight:normal;color:#000;right:102.5px;text-align:right;letter-spacing:0.25px;">5.500</div>
<div class="t" style="top:382px;font-size:12px;font-weight:normal;color:#000;right:8.5px;text-align:right;letter-spacing:0.25px;">11:14:37</div>
<div class="t" style="top:401px;font-size:12px;font-weight:bold;color:#008000;right:169px;text-align:right;letter-spacing:0.4px;">0,096</div>
<div class="t" style="top:401px;font-size:12px;font-weight:normal;color:#000;right:102.5px;text-align:right;letter-spacing:0.25px;">5.500</div>
<div class="t" style="top:401px;font-size:12px;font-weight:normal;color:#000;right:8.5px;text-align:right;letter-spacing:0.25px;">11:14:34</div>
<div class="a" style="left:455px;top:417px;width:218px;height:19px;background:#e0e0e0;"></div>
<div class="t" style="top:420px;font-size:12px;font-weight:bold;color:#008000;right:169px;text-align:right;letter-spacing:0.4px;">0,097</div>
<div class="t" style="top:420px;font-size:12px;font-weight:normal;color:#000;right:102.5px;text-align:right;letter-spacing:0.25px;">55</div>
<div class="t" style="top:420px;font-size:12px;font-weight:normal;color:#000;right:8.5px;text-align:right;letter-spacing:0.25px;">11:12:54</div>
<div class="t" style="top:439px;font-size:12px;font-weight:bold;color:#008000;right:169px;text-align:right;letter-spacing:0.4px;">0,095</div>
<div class="t" style="top:439px;font-size:12px;font-weight:normal;color:#000;right:102.5px;text-align:right;letter-spacing:0.25px;">10.000</div>
<div class="t" style="top:439px;font-size:12px;font-weight:normal;color:#000;right:8.5px;text-align:right;letter-spacing:0.25px;">11:12:51</div>
<div class="t" style="top:458px;font-size:12px;font-weight:bold;color:#d00000;right:169px;text-align:right;letter-spacing:0.4px;">0,095</div>
<div class="t" style="top:458px;font-size:12px;font-weight:normal;color:#000;right:102.5px;text-align:right;letter-spacing:0.25px;">10.000</div>
<div class="t" style="top:458px;font-size:12px;font-weight:normal;color:#000;right:8.5px;text-align:right;letter-spacing:0.25px;">11:12:28</div>
<div class="t" style="top:477px;font-size:12px;font-weight:bold;color:#d00000;right:169px;text-align:right;letter-spacing:0.4px;">0,095</div>
<div class="t" style="top:477px;font-size:12px;font-weight:normal;color:#000;right:102.5px;text-align:right;letter-spacing:0.25px;">10.000</div>
<div class="t" style="top:477px;font-size:12px;font-weight:normal;color:#000;right:8.5px;text-align:right;letter-spacing:0.25px;">11:12:17</div>
<div class="a" style="left:455px;top:493px;width:218px;height:19px;background:#e0e0e0;"></div>
<div class="t" style="top:496px;font-size:12px;font-weight:bold;color:#d00000;right:169px;text-align:right;letter-spacing:0.4px;">0,096</div>
<div class="t" style="top:496px;font-size:12px;font-weight:normal;color:#000;right:102.5px;text-align:right;letter-spacing:0.25px;">10.000</div>
<div class="t" style="top:496px;font-size:12px;font-weight:normal;color:#000;right:8.5px;text-align:right;letter-spacing:0.25px;">11:12:08</div>
<div class="t" style="top:515px;font-size:12px;font-weight:bold;color:#d00000;right:169px;text-align:right;letter-spacing:0.4px;">0,098</div>
<div class="t" style="top:515px;font-size:12px;font-weight:normal;color:#000;right:102.5px;text-align:right;letter-spacing:0.25px;">10.000</div>
<div class="t" style="top:515px;font-size:12px;font-weight:normal;color:#000;right:8.5px;text-align:right;letter-spacing:0.25px;">11:10:59</div>
<div class="a" style="left:455px;top:531px;width:218px;height:17px;background:#e0e0e0;"></div>
<div class="t" style="top:534px;font-size:12px;font-weight:bold;color:#000;right:169px;text-align:right;letter-spacing:0.4px;">0,1</div>
<div class="t" style="top:534px;font-size:12px;font-weight:normal;color:#000;right:102.5px;text-align:right;letter-spacing:0.25px;">9.000</div>
<div class="t" style="top:534px;font-size:12px;font-weight:normal;color:#000;right:8.5px;text-align:right;letter-spacing:0.25px;">11:10:34</div>
<svg class="a" style="left:238px;top:167px" width="16" height="22"><path d="M1.5 1 L1.5 17.5 L5 14.2 L8 19.5 L10.8 18.2 L8.2 13.2 L12.8 13 Z" fill="#fff" stroke="#000" stroke-width="1" stroke-linejoin="miter"/></svg>
</body></html>
